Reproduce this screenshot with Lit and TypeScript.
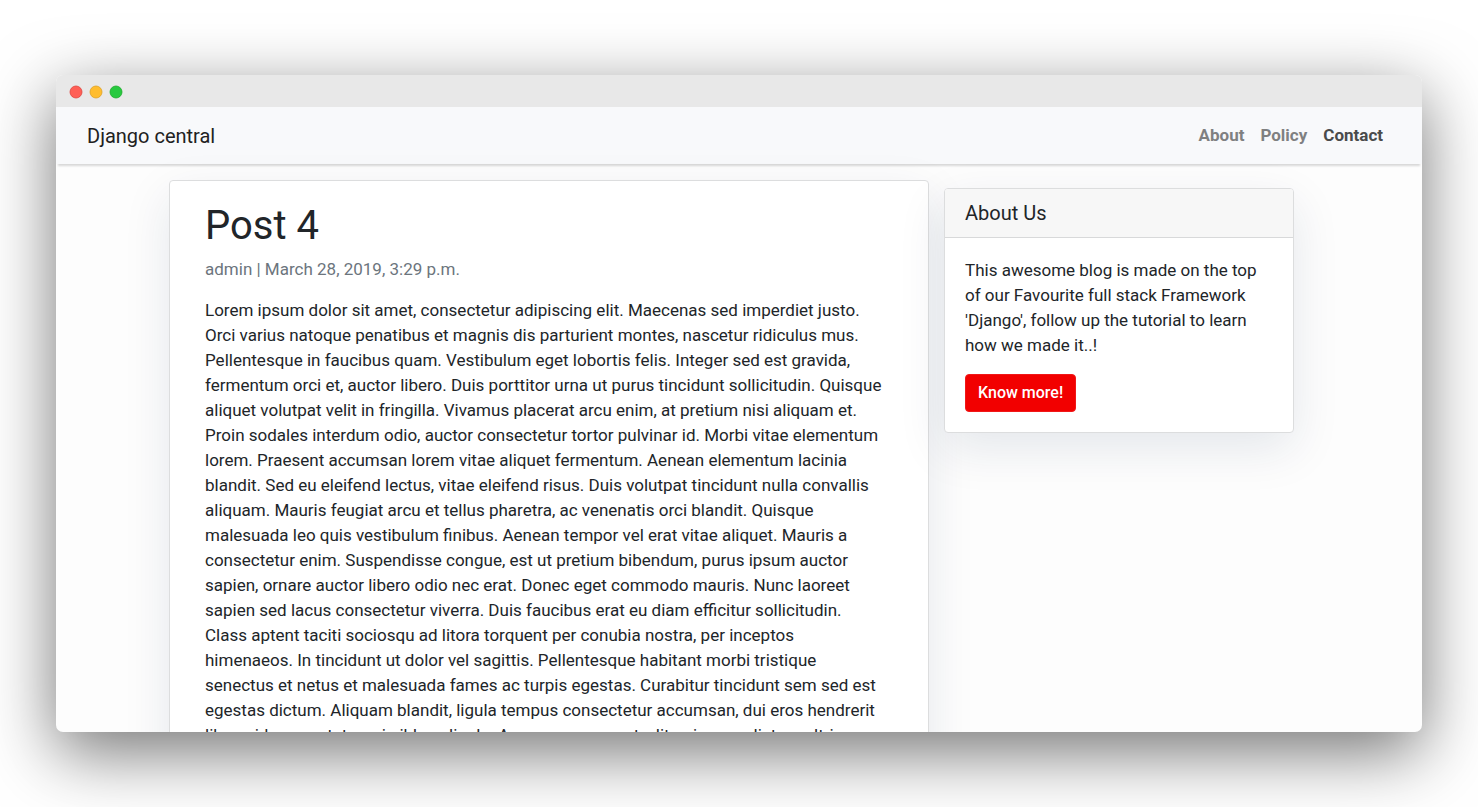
import { LitElement, html, css } from "lit";
import { customElement } from "lit/decorators.js";

const NAV = [
  { label: "About", active: false },
  { label: "Policy", active: false },
  { label: "Contact", active: true },
];

const POST_TEXT = `Lorem ipsum dolor sit amet, consectetur adipiscing elit. Maecenas sed imperdiet justo.
Orci varius natoque penatibus et magnis dis parturient montes, nascetur ridiculus mus.
Pellentesque in faucibus quam. Vestibulum eget lobortis felis. Integer sed est gravida,
fermentum orci et, auctor libero. Duis porttitor urna ut purus tincidunt sollicitudin. Quisque
aliquet volutpat velit in fringilla. Vivamus placerat arcu enim, at pretium nisi aliquam et.
Proin sodales interdum odio, auctor consectetur tortor pulvinar id. Morbi vitae elementum
lorem. Praesent accumsan lorem vitae aliquet fermentum. Aenean elementum lacinia
blandit. Sed eu eleifend lectus, vitae eleifend risus. Duis volutpat tincidunt nulla convallis
aliquam. Mauris feugiat arcu et tellus pharetra, ac venenatis orci blandit. Quisque
malesuada leo quis vestibulum finibus. Aenean tempor vel erat vitae aliquet. Mauris a
consectetur enim. Suspendisse congue, est ut pretium bibendum, purus ipsum auctor
sapien, ornare auctor libero odio nec erat. Donec eget commodo mauris. Nunc laoreet
sapien sed lacus consectetur viverra. Duis faucibus erat eu diam efficitur sollicitudin.
Class aptent taciti sociosqu ad litora torquent per conubia nostra, per inceptos
himenaeos. In tincidunt ut dolor vel sagittis. Pellentesque habitant morbi tristique
senectus et netus et malesuada fames ac turpis egestas. Curabitur tincidunt sem sed est
egestas dictum. Aliquam blandit, ligula tempus consectetur accumsan, dui eros hendrerit
libero, id consectetur mi nibh ac ligula. Aenean consequat, elit quis urna dictum ultrices`;

@customElement("app-root")
export class AppRoot extends LitElement {
  static styles = css`
    :host {
      display: flex;
      flex-direction: column;
      box-sizing: border-box;
      height: 100vh;
      padding: 75px 56px;
      overflow: hidden;
      background: #fff;
      color: #212529;
      font-family: Roboto, sans-serif;
      font-size: 17px;
      line-height: 25px;
    }
    * {
      box-sizing: border-box;
    }
    h1,
    h2,
    p {
      margin: 0;
      font-weight: 400;
    }
    .window {
      display: flex;
      flex-direction: column;
      flex: 1;
      min-height: 0;
      overflow: hidden;
      border-radius: 7px;
      background: #fdfdfd;
      box-shadow: 0 20px 68px rgba(0, 0, 0, 0.55);
    }
    .titlebar {
      display: flex;
      flex: none;
      align-items: center;
      gap: 6px;
      height: 32px;
      padding: 2px 13px 0;
      background: #e8e8e8;
    }
    .navbar {
      display: flex;
      flex: none;
      align-items: center;
      justify-content: space-between;
      padding: 8px 39px 8px 31px;
      background: #f8f9fb;
      box-shadow: 0 4px 2px -2px rgba(0, 0, 0, 0.15);
      height: 57px;
    }
    .brand {
      color: #212121;
      font-size: 20px;
      line-height: 30px;
      text-decoration: none;
    }
    .links {
      display: flex;
      gap: 16px;
    }
    .link {
      color: #7f8081;
      font-weight: 700;
      text-decoration: none;
    }
    .link.active {
      color: #4a4b4b;
    }
    .content {
      display: grid;
      grid-template-columns: 760fr 350fr;
      align-items: start;
      gap: 15px;
      width: 100%;
      max-width: 1140px;
      margin: 0 auto;
      padding: 16px 15px 16px 0;
    }
    .card {
      border: 1px solid #dcddde;
      border-radius: 4px;
      background: #fff;
      box-shadow: 0 16px 48px rgba(11, 37, 74, 0.1);
    }
    .post {
      padding: 20px 35px;
    }
    .title {
      font-size: 40px;
      line-height: 50px;
    }
    .meta {
      margin: 6px 0 16px;
      color: #6c757d;
    }
    .text {
      white-space: pre-line;
    }
    .about {
      margin-top: 8px;
    }
    .about-title {
      padding: 12px 20px;
      border-bottom: 1px solid #d8d9da;
      background: #f7f7f7;
      border-radius: 3px 3px 0 0;
      font-size: 20px;
      line-height: 24px;
    }
    .about-body {
      display: flex;
      flex-direction: column;
      align-items: flex-start;
      gap: 16px;
      padding: 20px;
    }
    .more {
      padding: 6px 12px;
      border: 1px solid #f01818;
      border-radius: 4px;
      background: #f20000;
      color: #fff;
      font: 500 16px/24px Roboto, sans-serif;
    }
  `;

  render() {
    return html`
      <div class="window">
        <div class="titlebar">
          <svg width="54" height="14" viewBox="0 0 54 14" aria-hidden="true">
            <circle cx="7" cy="7" r="6" fill="#ff5f56" stroke="#e0443e" stroke-width="0.8" />
            <circle cx="27" cy="7" r="6" fill="#ffbd2e" stroke="#dea123" stroke-width="0.8" />
            <circle cx="47" cy="7" r="6" fill="#27c93f" stroke="#1aab29" stroke-width="0.8" />
          </svg>
        </div>
        <nav class="navbar">
          <a class="brand" href="#">Django central</a>
          <div class="links">
            ${NAV.map(
              (item) => html`<a class="link ${item.active ? "active" : ""}" href="#">${item.label}</a>`
            )}
          </div>
        </nav>
        <main class="content">
          <article class="card post">
            <h1 class="title">Post 4</h1>
            <p class="meta">admin | March 28, 2019, 3:29 p.m.</p>
            <p class="text">${POST_TEXT}</p>
          </article>
          <aside class="card about">
            <h2 class="about-title">About Us</h2>
            <div class="about-body">
              <p>
                This awesome blog is made on the top of our Favourite full stack Framework
                'Django', follow up the tutorial to learn how we made it..!
              </p>
              <button class="more" type="button">Know more!</button>
            </div>
          </aside>
        </main>
      </div>
    `;
  }
}
